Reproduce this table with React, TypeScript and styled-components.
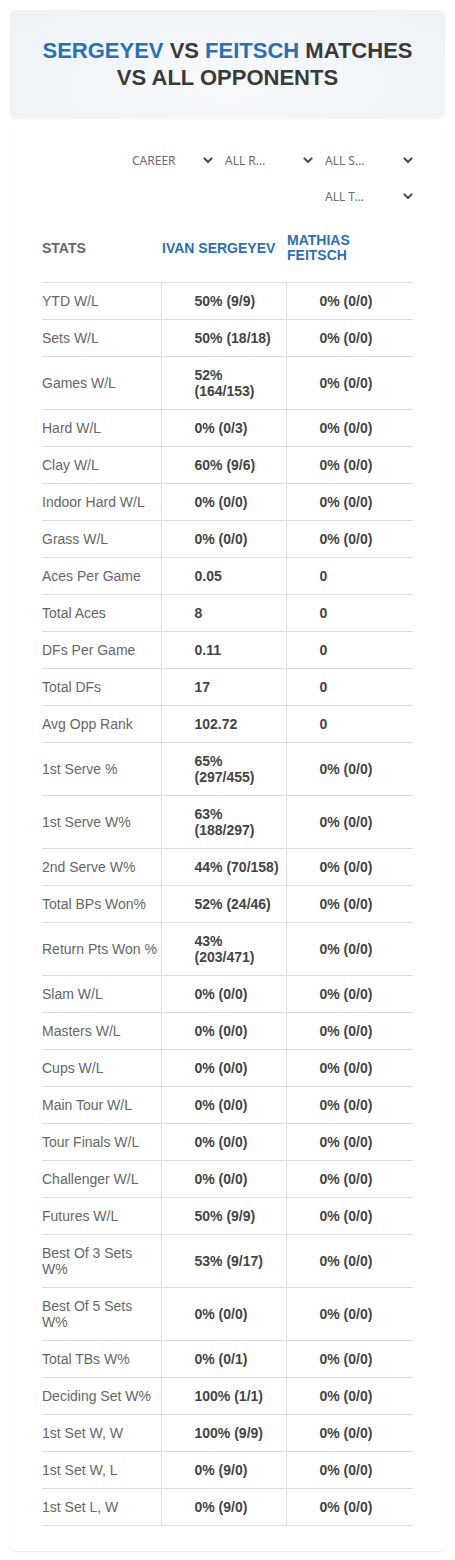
import React from 'react';
import styled, { createGlobalStyle } from 'styled-components';

/* ---------------------------------------------------------------------- */

type Row = { label: string; p1: string; p2: string };

const rows: Row[] = [
  { label: 'YTD W/L', p1: '50% (9/9)', p2: '0% (0/0)' },
  { label: 'Sets W/L', p1: '50% (18/18)', p2: '0% (0/0)' },
  { label: 'Games W/L', p1: '52% (164/153)', p2: '0% (0/0)' },
  { label: 'Hard W/L', p1: '0% (0/3)', p2: '0% (0/0)' },
  { label: 'Clay W/L', p1: '60% (9/6)', p2: '0% (0/0)' },
  { label: 'Indoor Hard W/L', p1: '0% (0/0)', p2: '0% (0/0)' },
  { label: 'Grass W/L', p1: '0% (0/0)', p2: '0% (0/0)' },
  { label: 'Aces Per Game', p1: '0.05', p2: '0' },
  { label: 'Total Aces', p1: '8', p2: '0' },
  { label: 'DFs Per Game', p1: '0.11', p2: '0' },
  { label: 'Total DFs', p1: '17', p2: '0' },
  { label: 'Avg Opp Rank', p1: '102.72', p2: '0' },
  { label: '1st Serve %', p1: '65% (297/455)', p2: '0% (0/0)' },
  { label: '1st Serve W%', p1: '63% (188/297)', p2: '0% (0/0)' },
  { label: '2nd Serve W%', p1: '44% (70/158)', p2: '0% (0/0)' },
  { label: 'Total BPs Won%', p1: '52% (24/46)', p2: '0% (0/0)' },
  { label: 'Return Pts Won %', p1: '43% (203/471)', p2: '0% (0/0)' },
  { label: 'Slam W/L', p1: '0% (0/0)', p2: '0% (0/0)' },
  { label: 'Masters W/L', p1: '0% (0/0)', p2: '0% (0/0)' },
  { label: 'Cups W/L', p1: '0% (0/0)', p2: '0% (0/0)' },
  { label: 'Main Tour W/L', p1: '0% (0/0)', p2: '0% (0/0)' },
  { label: 'Tour Finals W/L', p1: '0% (0/0)', p2: '0% (0/0)' },
  { label: 'Challenger W/L', p1: '0% (0/0)', p2: '0% (0/0)' },
  { label: 'Futures W/L', p1: '50% (9/9)', p2: '0% (0/0)' },
  { label: 'Best Of 3 Sets W%', p1: '53% (9/17)', p2: '0% (0/0)' },
  { label: 'Best Of 5 Sets W%', p1: '0% (0/0)', p2: '0% (0/0)' },
  { label: 'Total TBs W%', p1: '0% (0/1)', p2: '0% (0/0)' },
  { label: 'Deciding Set W%', p1: '100% (1/1)', p2: '0% (0/0)' },
  { label: '1st Set W, W', p1: '100% (9/9)', p2: '0% (0/0)' },
  { label: '1st Set W, L', p1: '0% (9/0)', p2: '0% (0/0)' },
  { label: '1st Set L, W', p1: '0% (9/0)', p2: '0% (0/0)' },
];

const filters = [
  { text: 'CAREER', indent: 15 },
  { text: 'ALL R…', indent: 8 },
  { text: 'ALL S…', indent: 8 },
  { text: 'ALL T…', indent: 8 },
];

const Chevron = () => (
  <svg width="10" height="7" viewBox="0 0 10 7">
    <polyline
      points="1.5,1.5 5,5 8.5,1.5"
      fill="none"
      stroke="#555"
      strokeWidth="2.2"
      strokeLinecap="round"
      strokeLinejoin="round"
    />
  </svg>
);

export default function App() {
  return (
    <Page>
      <GlobalStyle />
      <TitleCard>
        <Title>
          <Blue>SERGEYEV</Blue> VS <Blue>FEITSCH</Blue> MATCHES
          <br />
          VS ALL OPPONENTS
        </Title>
      </TitleCard>

      <Panel>
        <Filters>
          {filters.map((f) => (
            <Select key={f.text} $indent={f.indent}>
              <span>{f.text}</span>
              <Chevron />
            </Select>
          ))}
        </Filters>

        <Table>
          <colgroup>
            <col style={{ width: 119 }} />
            <col style={{ width: 125 }} />
            <col style={{ width: 127 }} />
          </colgroup>
          <thead>
            <tr>
              <HeadCell>STATS</HeadCell>
              <HeadCell $player>IVAN SERGEYEV</HeadCell>
              <HeadCell $player>MATHIAS FEITSCH</HeadCell>
            </tr>
          </thead>
          <tbody>
            {rows.map((r) => (
              <tr key={r.label}>
                <LabelCell>{r.label}</LabelCell>
                <ValueCell>{r.p1}</ValueCell>
                <ValueCell>{r.p2}</ValueCell>
              </tr>
            ))}
          </tbody>
        </Table>
      </Panel>
    </Page>
  );
}

/* ---------------------------------------------------------------------- */

const GlobalStyle = createGlobalStyle`
  body {
    margin: 0;
    background: #fff;
    font-family: 'Liberation Sans', Arial, sans-serif;
  }
`;

const Page = styled.div`
  width: 455px;
  padding: 10px;
  box-sizing: border-box;
`;

const TitleCard = styled.div`
  height: 108px;
  border-radius: 6px;
  background: radial-gradient(
    ellipse at 50% 70%,
    #f8fafc 0%,
    #f1f4f8 60%,
    #eef2f6 100%
  );
  box-shadow: 0 1px 3px rgba(0, 0, 0, 0.05);
  display: flex;
  align-items: center;
  justify-content: center;
`;

const Title = styled.h1`
  margin: 0;
  text-align: center;
  font-size: 22px;
  line-height: 27px;
  font-weight: 700;
  color: #3a3a3a;
`;

const Blue = styled.span`
  color: #2b70b0;
`;

const Panel = styled.div`
  margin-top: 8px;
  padding: 16px 32px 25px;
  border-radius: 6px;
  box-shadow: 0 1px 2px rgba(0, 0, 0, 0.07);
`;

const Filters = styled.div`
  display: flex;
  flex-wrap: wrap;
  justify-content: flex-end;
  width: 375px;
`;

const Select = styled.div<{ $indent: number }>`
  width: 100px;
  height: 36px;
  box-sizing: border-box;
  padding: 0 4px 0 ${(p) => p.$indent}px;
  display: flex;
  align-items: center;
  justify-content: space-between;
  font-family: 'Noto Sans', 'Open Sans', sans-serif;
  font-size: 12px;
  color: #6b6b6b;
`;

const Table = styled.table`
  width: 371px;
  border-collapse: collapse;
  table-layout: fixed;
  font-size: 14px;
  line-height: 16px;
`;

const HeadCell = styled.th<{ $player?: boolean }>`
  height: 68px;
  padding: 0 6px 0 ${(p) => (p.$player ? '1px' : '0')};
  text-align: left;
  vertical-align: middle;
  font-weight: 700;
  font-size: 14px;
  line-height: 15px;
  color: ${(p) => (p.$player ? '#2b70b0' : '#666')};
  border-bottom: 1px solid #dedede;
`;

const LabelCell = styled.td`
  padding: 10px 0;
  color: #666;
  border-bottom: 1px solid #dedede;
  vertical-align: middle;
`;

const ValueCell = styled.td`
  padding: 10px 0 10px 33px;
  font-weight: 700;
  color: #444;
  border-bottom: 1px solid #dedede;
  border-left: 1px solid #dedede;
  vertical-align: middle;
`;
